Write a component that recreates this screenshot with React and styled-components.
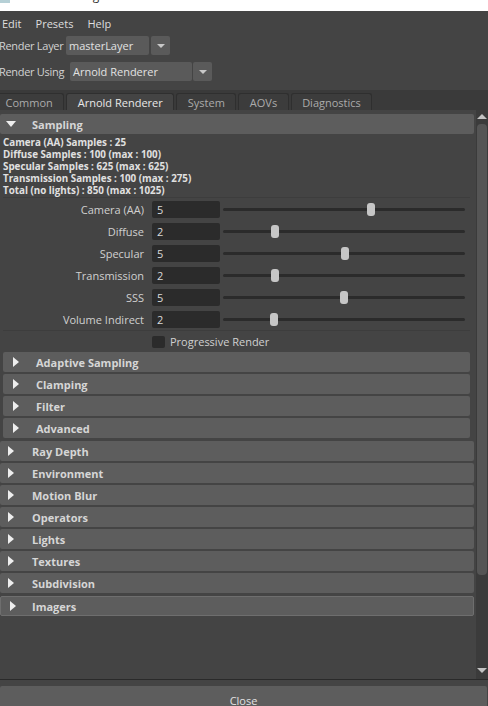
import React from "react";
import styled, { createGlobalStyle } from "styled-components";

const GlobalStyle = createGlobalStyle`
  html, body { margin: 0; padding: 0; background: #444444; }
  body {
    font-family: "Open Sans", "Liberation Sans", sans-serif;
    font-size: 11px;
    color: #cfcfcf;
  }
  * { box-sizing: border-box; }
`;

const Window = styled.div`
  width: 488px;
  height: 706px;
  overflow: hidden;
  display: flex;
  flex-direction: column;
  background: #444444;
`;

/* ---------- window chrome ---------- */
const TitleBar = styled.div`
  height: 11px;
  flex: none;
  background: #ffffff;
  overflow: hidden;
  display: flex;
  align-items: flex-start;
  gap: 7px;
`;
const TitleIcon = styled.span`
  flex: none;
  width: 10px;
  height: 3px;
  background: #b6d0d6;
`;
const TitleText = styled.span`
  font-size: 12px;
  line-height: 16px;
  margin-top: -12px;
  color: #333;
`;

const MenuBar = styled.div`
  height: 24px;
  flex: none;
  display: flex;
  align-items: center;
  gap: 14px;
  padding-left: 2px;
  color: #dedede;
`;

/* ---------- layer / renderer pickers ---------- */
const Options = styled.div`
  flex: none;
  display: flex;
  flex-direction: column;
  gap: 7px;
  padding: 1px 0 9px;
`;
const OptionRow = styled.div`
  display: flex;
  align-items: center;
  height: 19px;
`;
const OptionLabel = styled.span`
  width: ${(p) => p.$width}px;
  margin-left: -1px;
  letter-spacing: -0.3px;
  color: #d2d2d2;
  white-space: nowrap;
`;
const Combo = styled.div`
  display: flex;
  gap: ${(p) => p.$gap}px;
`;
const ComboField = styled.div`
  width: ${(p) => p.$width}px;
  height: 19px;
  background: #5a5a5a;
  border-radius: 2px;
  padding-left: 3px;
  display: flex;
  align-items: center;
  color: #e2e2e2;
`;
const ComboButton = styled.div`
  width: 19px;
  height: 19px;
  background: #5a5a5a;
  border-radius: 2px;
  display: flex;
  align-items: center;
  justify-content: center;
  &::after {
    content: "";
    border-top: 4px solid #c8c8c8;
    border-left: 4px solid transparent;
    border-right: 4px solid transparent;
  }
`;

/* ---------- tabs ---------- */
const TabBar = styled.div`
  height: 20px;
  flex: none;
  background: #3a3a3a;
  display: flex;
  align-items: flex-end;
  gap: 2px;
  & > :first-child { margin-left: -6px; }
`;
const Tab = styled.div`
  height: 17px;
  padding: 0 10.5px;
  border: 1px solid #2f2f2f;
  border-bottom: 0;
  border-radius: 3px 3px 0 0;
  background: ${(p) => (p.$active ? "#444444" : "#3c3c3c")};
  color: ${(p) => (p.$active ? "#e8e8e8" : "#ababab")};
  display: flex;
  align-items: center;
  white-space: nowrap;
`;

/* ---------- scrolling body ---------- */
const ScrollArea = styled.div`
  height: 569px;
  flex: none;
  display: flex;
`;
const Content = styled.div`
  flex: 1;
  padding: 4px 2px 0 0;
  display: flex;
  flex-direction: column;
  gap: 2px;
`;

const Frame = styled.div`
  display: flex;
  flex-direction: column;
`;
const Header = styled.div`
  height: 20px;
  flex: none;
  background: #5d5d5d;
  border-radius: 2px;
  display: flex;
  align-items: center;
  font-weight: 700;
  color: #d6d6d6;
  ${(p) => p.$focused && `
    border: 1px solid #6e6e6e;
    margin-top: 1px;
  `}
`;
const CaretSlot = styled.span`
  flex: none;
  width: ${(p) => p.$width}px;
  padding-left: ${(p) => p.$pad}px;
  display: flex;
  align-items: center;
`;
const CaretRight = styled.span`
  border-left: 6px solid #eeeeee;
  border-top: 5px solid transparent;
  border-bottom: 5px solid transparent;
`;
const CaretDown = styled.span`
  border-top: 6px solid #eeeeee;
  border-left: 5.5px solid transparent;
  border-right: 5.5px solid transparent;
`;

const FrameBody = styled.div`
  display: flex;
  flex-direction: column;
  padding: 3px 4px 1px 3px;
`;
const Info = styled.div`
  font-size: 9.8px;
  font-weight: 700;
  line-height: 12px;
  color: #e0e0e0;
  white-space: nowrap;
`;
const SliderGroup = styled.div`
  border-top: 1px solid #3d3d3d;
  border-bottom: 1px solid #3d3d3d;
  display: flex;
  flex-direction: column;
`;
const SliderRow = styled.div`
  height: 22px;
  display: flex;
  align-items: center;
`;
const FieldLabel = styled.span`
  width: 141px;
  margin-right: 8px;
  text-align: right;
  color: #d0d0d0;
  white-space: nowrap;
`;
const NumField = styled.div`
  width: 68px;
  height: 17px;
  background: #2b2b2b;
  border-radius: 2px;
  padding-left: 5px;
  display: flex;
  align-items: center;
  color: #dadada;
`;
const Track = styled.div`
  position: relative;
  width: 242px;
  height: 22px;
  margin-left: 3px;
  &::before {
    content: "";
    position: absolute;
    left: 0;
    right: 0;
    top: 9.5px;
    height: 3px;
    border-radius: 2px;
    background: #2b2b2b;
  }
`;
const Thumb = styled.span`
  position: absolute;
  top: 4.5px;
  left: ${(p) => p.$at - 4}px;
  width: 8px;
  height: 13px;
  border-radius: 3px;
  background: #c6c6c6;
`;

const CheckRow = styled.label`
  height: 21px;
  display: flex;
  align-items: center;
  padding-left: 149px;
  color: #d0d0d0;
`;
const CheckBox = styled.span`
  width: 13px;
  height: 12px;
  margin-right: 5px;
  background: #2b2b2b;
  border-radius: 2px;
`;

const SubList = styled.div`
  display: flex;
  flex-direction: column;
  gap: 2px;
`;

const ScrollBar = styled.div`
  flex: none;
  width: 12px;
  height: 569px;
  background: #3b3b3b;
  display: flex;
  flex-direction: column;
  align-items: center;
  padding: 4px 0 6px;
`;
const ArrowUp = styled.span`
  border-bottom: 5px solid #c2c2c2;
  border-left: 5px solid transparent;
  border-right: 5px solid transparent;
`;
const ArrowDown = styled.span`
  margin-top: auto;
  border-top: 5px solid #c2c2c2;
  border-left: 5px solid transparent;
  border-right: 5px solid transparent;
`;
const ScrollThumb = styled.span`
  margin-top: 5px;
  width: 10px;
  height: 451px;
  border-radius: 4px;
  background: #555555;
`;

/* ---------- footer ---------- */
const Footer = styled.div`
  flex: none;
  border-top: 1px solid #2a2a2a;
  padding: 6px 1px 0 0;
`;
const CloseButton = styled.div`
  height: 28px;
  background: #5d5d5d;
  border-radius: 2px;
  display: flex;
  align-items: center;
  justify-content: center;
  color: #e2e2e2;
`;

const infoLines = [
  "Camera (AA) Samples : 25",
  "Diffuse Samples : 100 (max : 100)",
  "Specular Samples : 625 (max : 625)",
  "Transmission Samples : 100 (max : 275)",
  "Total (no lights) : 850 (max : 1025)",
];

const sliders = [
  { label: "Camera (AA)", value: "5", at: 148 },
  { label: "Diffuse", value: "2", at: 52 },
  { label: "Specular", value: "5", at: 122 },
  { label: "Transmission", value: "2", at: 52 },
  { label: "SSS", value: "5", at: 121 },
  { label: "Volume Indirect", value: "2", at: 51 },
];

const subSections = ["Adaptive Sampling", "Clamping", "Filter", "Advanced"];
const sections = [
  "Ray Depth",
  "Environment",
  "Motion Blur",
  "Operators",
  "Lights",
  "Textures",
  "Subdivision",
];

function Collapsed({ title, nested, focused }) {
  return (
    <Header $focused={focused}>
      <CaretSlot $width={nested ? 33 : focused ? 31 : 32} $pad={nested ? 10 : focused ? 9 : 8}>
        <CaretRight />
      </CaretSlot>
      {title}
    </Header>
  );
}

export default function App() {
  return (
    <>
      <GlobalStyle />
      <Window>
        <TitleBar>
          <TitleIcon />
          <TitleText>Render Settings</TitleText>
        </TitleBar>

        <MenuBar>
          <span>Edit</span>
          <span>Presets</span>
          <span>Help</span>
        </MenuBar>

        <Options>
          <OptionRow>
            <OptionLabel $width={67}>Render Layer</OptionLabel>
            <Combo $gap={2}>
              <ComboField $width={83}>masterLayer</ComboField>
              <ComboButton />
            </Combo>
          </OptionRow>
          <OptionRow>
            <OptionLabel $width={71}>Render Using</OptionLabel>
            <Combo $gap={1}>
              <ComboField $width={122}>Arnold Renderer</ComboField>
              <ComboButton />
            </Combo>
          </OptionRow>
        </Options>

        <TabBar>
          <Tab>Common</Tab>
          <Tab $active>Arnold Renderer</Tab>
          <Tab>System</Tab>
          <Tab>AOVs</Tab>
          <Tab>Diagnostics</Tab>
        </TabBar>

        <ScrollArea>
          <Content>
            <Frame>
              <Header>
                <CaretSlot $width={32} $pad={6}>
                  <CaretDown />
                </CaretSlot>
                Sampling
              </Header>
              <FrameBody>
                <Info>
                  {infoLines.map((l) => (
                    <div key={l}>{l}</div>
                  ))}
                </Info>
                <SliderGroup>
                  {sliders.map((s) => (
                    <SliderRow key={s.label}>
                      <FieldLabel>{s.label}</FieldLabel>
                      <NumField>{s.value}</NumField>
                      <Track>
                        <Thumb $at={s.at} />
                      </Track>
                    </SliderRow>
                  ))}
                </SliderGroup>
                <CheckRow>
                  <CheckBox />
                  Progressive Render
                </CheckRow>
                <SubList>
                  {subSections.map((t) => (
                    <Collapsed key={t} title={t} nested />
                  ))}
                </SubList>
              </FrameBody>
            </Frame>
            {sections.map((t) => (
              <Collapsed key={t} title={t} />
            ))}
            <Collapsed title="Imagers" focused />
          </Content>
          <ScrollBar>
            <ArrowUp />
            <ScrollThumb />
            <ArrowDown />
          </ScrollBar>
        </ScrollArea>

        <Footer>
          <CloseButton>Close</CloseButton>
        </Footer>
      </Window>
    </>
  );
}
